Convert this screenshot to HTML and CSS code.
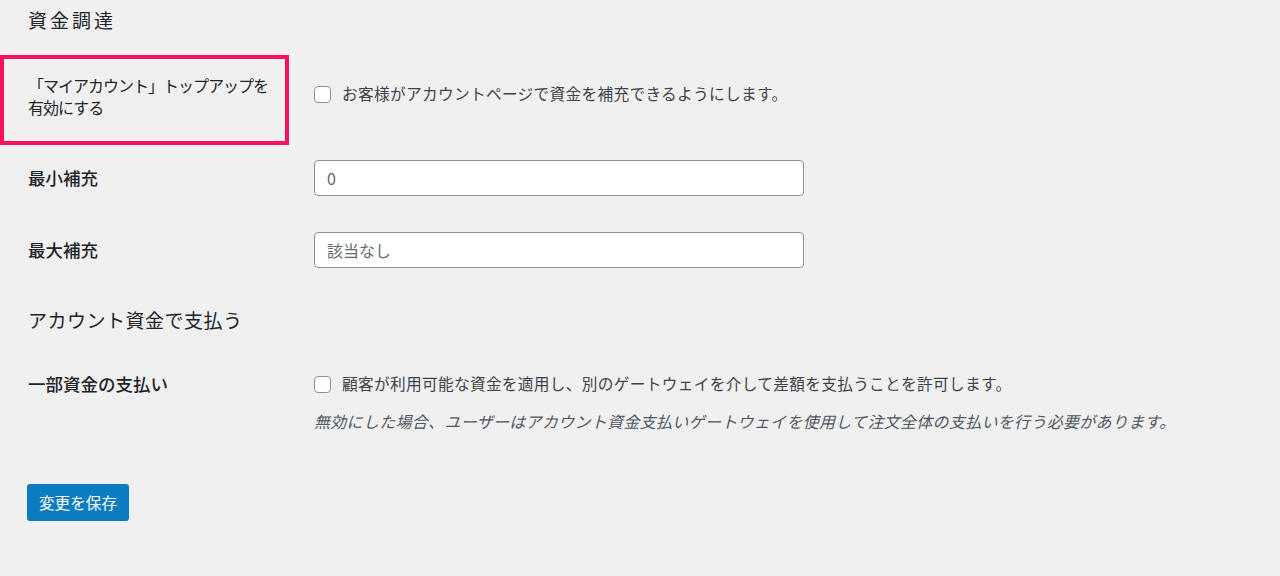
FILE: index.html
```html
<!DOCTYPE html>
<html lang="ja">
<head>
<meta charset="utf-8">
<title>資金調達</title>
<link rel="stylesheet" href="styles.css">
</head>
<body>
<div class="page">
  <h2 class="section-title section-first">資金調達</h2>

  <div class="form-row row-topup">
    <div class="field-label label-light">「マイアカウント」トップアップを<br>有効にする</div>
    <div class="field-control">
      <label class="check"><input type="checkbox"><span>お客様がアカウントページで資金を補充できるようにします。</span></label>
    </div>
    <div class="highlight"></div>
  </div>

  <div class="form-row row-input">
    <div class="field-label">最小補充</div>
    <div class="field-control"><input class="text-input" type="text" placeholder="0"></div>
  </div>

  <div class="form-row row-input">
    <div class="field-label">最大補充</div>
    <div class="field-control"><input class="text-input" type="text" placeholder="該当なし"></div>
  </div>

  <h2 class="section-title section-second">アカウント資金で支払う</h2>

  <div class="form-row row-partial">
    <div class="field-label">一部資金の支払い</div>
    <div class="field-control">
      <label class="check"><input type="checkbox"><span>顧客が利用可能な資金を適用し、別のゲートウェイを介して差額を支払うことを許可します。</span></label>
      <p class="note">無効にした場合、ユーザーはアカウント資金支払いゲートウェイを使用して注文全体の支払いを行う必要があります。</p>
    </div>
  </div>

  <div class="actions">
    <button class="button-primary" type="button">変更を保存</button>
  </div>
</div>
</body>
</html>
```

FILE: styles.css
```css
html, body {
  margin: 0;
  padding: 0;
  background: #f0f0f1;
}

body {
  font-family: "Noto Sans CJK JP", "Noto Sans", "Liberation Sans", sans-serif;
  color: #1d2327;
}

.page {
  padding: 8px 0 0 28px;
}

.section-title {
  margin: 0;
  font-size: 19px;
  line-height: 24px;
  font-weight: 400;
  color: #1d2327;
}

.section-first {
  letter-spacing: 3px;
}

.section-second {
  margin-top: 22px;
  letter-spacing: 0.5px;
}

.form-row {
  display: grid;
  grid-template-columns: 286px 1fr;
  align-items: center;
  position: relative;
}

.field-label {
  font-size: 17.5px;
  line-height: 24px;
  font-weight: 500;
  color: #1d2327;
}

.label-light {
  font-size: 16px;
  line-height: 22px;
  letter-spacing: -1px;
  font-weight: 400;
}

.row-topup {
  margin-top: 23px;
  height: 87px;
  padding-bottom: 5px;
  box-sizing: border-box;
}

.row-topup .field-control {
  margin-top: -4px;
}

.highlight {
  position: absolute;
  left: -28px;
  top: 0;
  width: 289px;
  height: 90px;
  border: 4px solid #f5135a;
  box-sizing: border-box;
  pointer-events: none;
}

.row-input {
  padding: 18px 0;
}

.text-input {
  display: block;
  width: 490px;
  height: 36px;
  box-sizing: border-box;
  border: 1px solid #8c8f94;
  border-radius: 4px;
  background: #fff;
  padding: 0 12px;
  font-family: inherit;
  font-size: 16px;
  color: #2c3338;
  outline: none;
}

.text-input::placeholder {
  color: #646970;
}

.check {
  display: flex;
  align-items: center;
  gap: 11px;
  font-size: 15.7px;
  line-height: 24px;
  letter-spacing: 0.3px;
  color: #3c434a;
}

.check input {
  appearance: none;
  -webkit-appearance: none;
  margin: 0;
  width: 17px;
  height: 17px;
  flex: none;
  border: 1px solid #8c8f94;
  border-radius: 4px;
  background: #fff;
  box-sizing: border-box;
}

.row-partial {
  align-items: start;
}

.row-partial .field-label,
.row-partial .field-control {
  padding-top: 40px;
}

.note {
  margin: 13px 0 0;
  font-size: 16px;
  line-height: 24px;
  letter-spacing: 0.3px;
  font-style: italic;
  color: #50575e;
}

.actions {
  margin-top: 51px;
}

.button-primary {
  height: 37px;
  padding: 0 12px;
  margin-left: -1px;
  border: none;
  border-radius: 3px;
  background: #0c7cc0;
  color: #fff;
  font-family: inherit;
  font-size: 15.6px;
  line-height: 37px;
}
```
